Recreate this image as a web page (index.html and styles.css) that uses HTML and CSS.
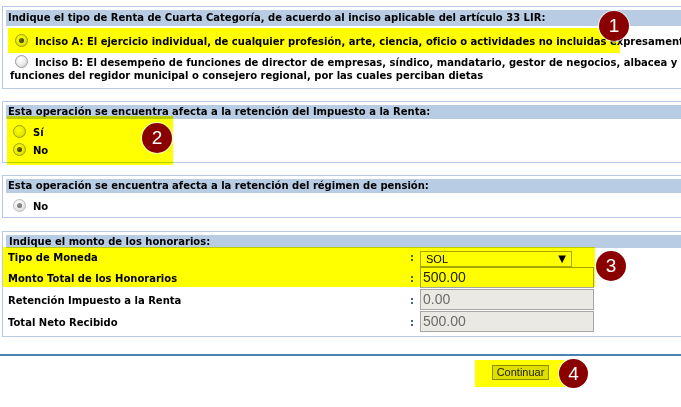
FILE: index.html
```html
<!DOCTYPE html>
<html lang="es">
<head>
  <meta charset="UTF-8">
  <title>Recibo por Honorarios</title>
  <link rel="stylesheet" href="styles.css">
</head>
<body>
<div class="page">

  <div class="box box-tipo">
    <div class="box-head">Indique el tipo de Renta de Cuarta Categoría, de acuerdo al inciso aplicable del artículo 33 LIR:</div>
    <div class="opt opt-a"><span class="radio on"></span>Inciso A: El ejercicio individual, de cualquier profesión, arte, ciencia, oficio o actividades no incluidas expresamente en el inciso B</div>
    <div class="opt opt-b"><span class="radio"></span>Inciso B: El desempeño de funciones de director de empresas, síndico, mandatario, gestor de negocios, albacea y actividades similares, incluyendo el desempeño de las<br>funciones del regidor municipal o consejero regional, por las cuales perciban dietas</div>
  </div>

  <div class="box box-ret">
    <div class="box-head">Esta operación se encuentra afecta a la retención del Impuesto a la Renta:</div>
    <div class="opt opt-short first"><span class="radio"></span>Sí</div>
    <div class="opt opt-short"><span class="radio on"></span>No</div>
  </div>

  <div class="box box-pen">
    <div class="box-head">Esta operación se encuentra afecta a la retención del régimen de pensión:</div>
    <div class="opt opt-short"><span class="radio on off"></span>No</div>
  </div>

  <div class="box box-monto">
    <div class="box-head">Indique el monto de los honorarios:</div>
    <div class="fields">
      <div class="f-label">Tipo de Moneda</div>
      <div class="f-colon">:</div>
      <div class="f-value"><div class="select">SOL<span class="arrow">▼</span></div></div>

      <div class="f-label">Monto Total de los Honorarios</div>
      <div class="f-colon">:</div>
      <div class="f-value"><div class="input">500.00</div></div>

      <div class="f-label">Retención Impuesto a la Renta</div>
      <div class="f-colon">:</div>
      <div class="f-value"><div class="input disabled">0.00</div></div>

      <div class="f-label">Total Neto Recibido</div>
      <div class="f-colon">:</div>
      <div class="f-value"><div class="input disabled">500.00</div></div>
    </div>
  </div>

  <div class="footer">
    <button class="btn">Continuar</button>
  </div>

  <!-- marcas de ayuda sobre el formulario -->
  <div class="hl hl-1"></div>
  <div class="hl hl-2"></div>
  <div class="hl hl-3"></div>
  <div class="hl hl-4"></div>
  <div class="mark mark-1">1</div>
  <div class="mark mark-2">2</div>
  <div class="mark mark-3">3</div>
  <div class="mark mark-4">4</div>
</div>
</body>
</html>
```

FILE: styles.css
```css
html, body {
  margin: 0;
  background: #fff;
  overflow: hidden;
}

body {
  font-family: "DejaVu Sans", Verdana, sans-serif;
  font-size: 10px;
  color: #000;
}

.page {
  position: relative;
  width: 681px;
  height: 407px;
  padding: 6px 0 0 2px;
  box-sizing: border-box;
}

.box {
  width: 900px;
  border: 1px solid #b7cbe8;
  padding: 3px 0 0 3px;
  box-sizing: border-box;
  margin-bottom: 12px;
}

.box-head {
  background: #b8cce4;
  font-weight: bold;
  line-height: 16px;
  padding-left: 2px;
  white-space: nowrap;
}

.opt {
  font-weight: bold;
  line-height: 13px;
  white-space: nowrap;
  padding-left: 4px;
}

.opt-a {
  margin-top: 2px;
  padding-top: 6px;
  padding-bottom: 6px;
}

.opt-b {
  padding-top: 1px;
  padding-bottom: 6px;
}

.opt-short {
  line-height: 18px;
  padding-left: 2px;
}

.box-ret {
  padding-bottom: 2px;
}

.box-ret .box-head {
  line-height: 14px;
}

.box-ret .first {
  margin-top: 5px;
}

.box-pen {
  margin-bottom: 13px;
}

.box-pen .box-head {
  line-height: 14px;
}

.box-pen .opt-short {
  margin-top: 5px;
  padding-bottom: 1px;
}

.radio {
  display: inline-block;
  width: 11px;
  height: 11px;
  border: 1px solid #9c9c9c;
  border-radius: 50%;
  background: radial-gradient(circle at 40% 35%, #ffffff 0%, #eeeeee 45%, #c9c9c9 100%);
  vertical-align: -2px;
  margin: 0 7px 0 5px;
  position: relative;
}

.radio.on::after {
  content: "";
  position: absolute;
  left: 3px;
  top: 3px;
  width: 5px;
  height: 5px;
  border-radius: 50%;
  background: radial-gradient(circle at 40% 35%, #6a6a6a, #2e2e2e);
}

.radio.off {
  border-color: #bdbdbd;
}

.radio.off::after {
  background: radial-gradient(circle at 40% 35%, #9a9a9a, #5e5e5e);
}

.box-monto {
  padding-left: 0;
  padding-bottom: 3px;
  margin-bottom: 17px;
}

.box-monto .box-head {
  line-height: 13px;
  margin-left: 3px;
  padding-left: 3px;
}

.fields {
  display: grid;
  grid-template-columns: 402px 10px 260px;
  align-items: center;
  padding-left: 5px;
  font-weight: bold;
}

.f-label {
  white-space: nowrap;
}

.f-colon {
  color: #1d4f8c;
}

.select {
  width: 152px;
  height: 16px;
  border: 1px solid #a8a8a8;
  box-sizing: border-box;
  font-family: "Liberation Sans", Arial, sans-serif;
  font-size: 11px;
  font-weight: normal;
  line-height: 14px;
  padding-left: 5px;
  margin-top: 3px;
  position: relative;
}

.select .arrow {
  position: absolute;
  right: 5px;
  top: 0;
  font-family: "DejaVu Sans", sans-serif;
  font-size: 10px;
  color: #000;
}

.input {
  width: 174px;
  height: 21px;
  border: 1px solid #a5a5a5;
  box-sizing: border-box;
  font-family: "Liberation Sans", Arial, sans-serif;
  font-size: 14px;
  font-weight: normal;
  line-height: 19px;
  padding-left: 2px;
  color: #222;
  background: #fff;
  margin-bottom: 1px;
}

.input.disabled {
  background: #ebe9e4;
  color: #6b6b6b;
}

.footer {
  border-top: 2px solid #4a82b6;
  margin-left: -2px;
  width: 681px;
  padding: 9px 0 0 492px;
  box-sizing: border-box;
}

.btn {
  display: block;
  width: 57px;
  height: 15px;
  padding: 0;
  border: 1px solid #8d8d6a;
  background: #dedede;
  font-family: "Liberation Sans", Arial, sans-serif;
  font-size: 11px;
  line-height: 13px;
  color: #222;
}

/* resaltado amarillo y numeros */
.hl {
  position: absolute;
  background: #ffff00;
  mix-blend-mode: multiply;
}

.hl-1 { left: 8px; top: 28px; width: 612px; height: 25px; }
.hl-2 { left: 7px; top: 116px; width: 166px; height: 49px; }
.hl-3 { left: 3px; top: 247px; width: 592px; height: 40px; }
.hl-4 { left: 475px; top: 360px; width: 90px; height: 27px; }

.mark {
  position: absolute;
  width: 30px;
  height: 30px;
  border-radius: 50%;
  background: #8a0000;
  color: #fff;
  font-family: "Liberation Sans", Arial, sans-serif;
  font-size: 19px;
  line-height: 30px;
  text-align: center;
  box-shadow: 0 0 0 1px rgba(255, 255, 255, 0.7);
}

.mark-1 { left: 599px; top: 11px; }
.mark-2 { left: 142px; top: 123px; }
.mark-3 { left: 596px; top: 251px; }
.mark-4 { left: 559px; top: 359px; width: 29px; height: 29px; line-height: 29px; }
```
